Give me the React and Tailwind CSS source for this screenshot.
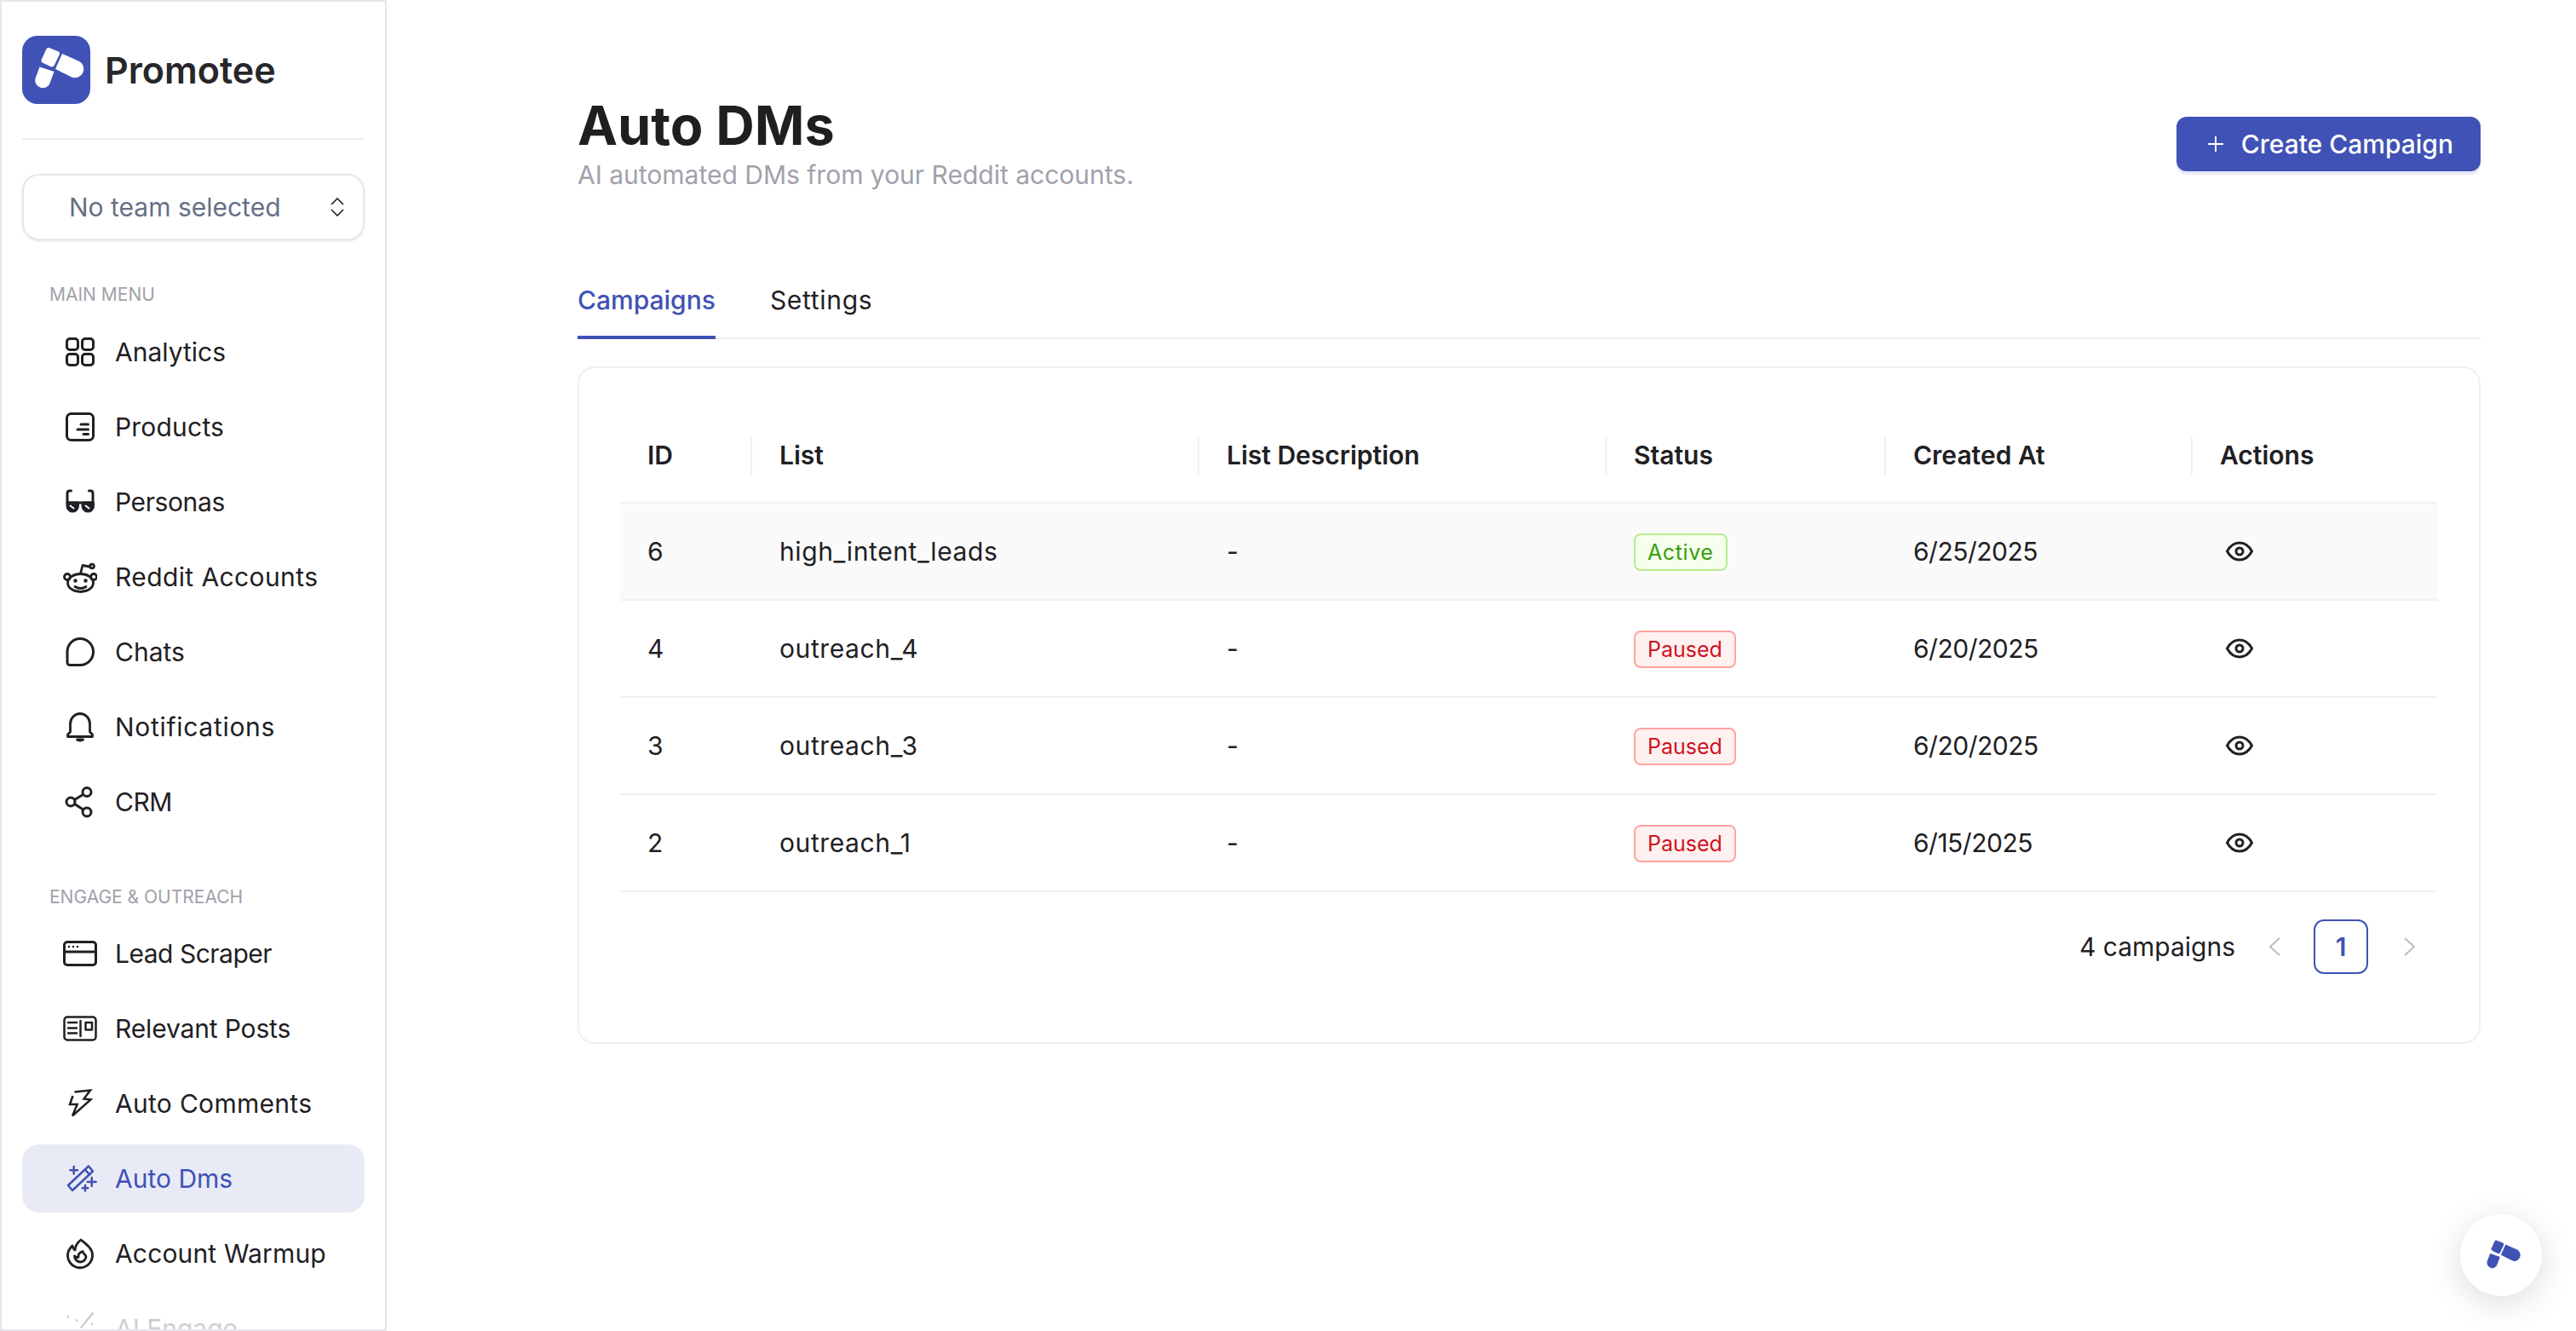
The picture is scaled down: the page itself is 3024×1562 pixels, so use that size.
import React from "react";

const LogoMark = ({ className }) => (
  <svg viewBox="0 0 80 80" className={className} fill="currentColor">
    <polygon points="31,17 41,21 35,33.5 25.5,29" stroke="currentColor" strokeWidth="6" strokeLinejoin="round" />
    <path d="M47 21 L66 29.5 A10 10 0 0 1 58 48.5 L39 39 Z" />
    <path d="M20.5 36.5 L37.5 42 L33 54.5 A9 9 0 0 1 15.5 50 Z" />
  </svg>
);

const Icon = ({ children, sw = 3 }) => (
  <svg viewBox="0 0 40 40" className="w-10 h-10 shrink-0" fill="none" stroke="currentColor" strokeWidth={sw} strokeLinecap="round" strokeLinejoin="round">
    {children}
  </svg>
);

const icons = {
  analytics: (
    <Icon>
      <rect x="4.5" y="4.5" width="13" height="13" rx="3.5" />
      <rect x="22.5" y="4.5" width="13" height="13" rx="3.5" />
      <rect x="4.5" y="22.5" width="13" height="13" rx="3.5" />
      <rect x="22.5" y="22.5" width="13" height="13" rx="3.5" />
    </Icon>
  ),
  products: (
    <Icon>
      <rect x="4.5" y="4.5" width="31" height="31" rx="5" />
      <path d="M21 17H29.5M17 23H29.5M24 28.5H29.5" />
    </Icon>
  ),
  personas: (
    <Icon>
      <path d="M9.5 7H7.5Q5 7 5 10V21H35V10Q35 7 32.5 7H30.5" />
      <path d="M5 21H17.5V25A6.3 7 0 0 1 5 25Z" fill="currentColor" />
      <path d="M23 21H35.5V25A6.3 7 0 0 1 23 25Z" fill="currentColor" />
      <path d="M8.5 24.5L12.5 27.5M26.5 24.5L30.5 27.5" stroke="#fff" strokeWidth="2" />
    </Icon>
  ),
  reddit: (
    <Icon sw={2.8}>
      <ellipse cx="20.5" cy="27" rx="15" ry="10.5" />
      <circle cx="5" cy="20" r="3.5" />
      <circle cx="36" cy="20" r="3.5" />
      <path d="M20.5 16L23 6.5L31 8" />
      <circle cx="34" cy="7.5" r="2.4" />
      <circle cx="14.5" cy="24.5" r="2.2" fill="currentColor" stroke="none" />
      <circle cx="26.5" cy="24.5" r="2.2" fill="currentColor" stroke="none" />
      <path d="M14 31.5Q20.5 35.5 27 31.5" />
    </Icon>
  ),
  chats: (
    <Icon>
      <path d="M20 4.5A15.5 15.5 0 0 1 20 35.5H8A3 3 0 0 1 5 32.5V20A15 15.5 0 0 1 20 4.5Z" />
    </Icon>
  ),
  bell: (
    <Icon sw={2.8}>
      <path d="M20 4.5A11.5 12 0 0 1 31.5 16.5V26L34.5 29V31.5H5.5V29L8.5 26V16.5A11.5 12 0 0 1 20 4.5Z" />
      <path d="M16.5 35H23.5Q20 37 16.5 35Z" fill="currentColor" />
    </Icon>
  ),
  crm: (
    <Icon>
      <circle cx="28" cy="8.5" r="5" />
      <circle cx="9" cy="20" r="5" />
      <circle cx="28" cy="32" r="5" />
      <path d="M13.5 17.5L23.5 11.5M13.5 22.5L23.5 29" />
    </Icon>
  ),
  scraper: (
    <Icon>
      <rect x="1.5" y="6.5" width="37" height="27" rx="3.5" />
      <path d="M2 18H38" />
      <circle cx="7" cy="12" r="1.3" fill="currentColor" stroke="none" />
      <circle cx="12" cy="12" r="1.3" fill="currentColor" stroke="none" />
      <circle cx="17" cy="12" r="1.3" fill="currentColor" stroke="none" />
    </Icon>
  ),
  posts: (
    <Icon sw={2.5}>
      <rect x="1.5" y="6.5" width="37" height="27" rx="3.5" />
      <path d="M6 13H16M6 19.5H16M6 25.5H16M20.5 11V29" />
      <rect x="26.5" y="13" width="7.5" height="8.5" />
    </Icon>
  ),
  comments: (
    <Icon sw={2.5}>
      <path d="M13.5 6.5L32 4.5L24.5 14.5L32.5 15.5L11 34.5L16.7 21H8L11.5 11" strokeLinejoin="miter" strokeLinecap="butt" />
    </Icon>
  ),
  wand: (
    <Icon sw={2.5}>
      <path d="M6 28L11 34L35 11.5L30 5.5Z" />
      <path d="M26 9.5L31 15.5" />
      <path d="M12.7 6V14.5M8.5 10.3H17M33.7 19V29M28.7 24H38.7M26 28V34.5M22.8 31.3H29.2" />
    </Icon>
  ),
  warmup: (
    <Icon sw={2.8}>
      <path d="M21 4C27 9 34.5 14 34.5 21.5A14.5 14.5 0 1 1 6.5 17C8 14 9.5 12 11 11C11.5 13 12 15 14 16C14.5 11 17 7 21 4Z" />
      <path d="M20 30A7 7 0 0 1 13.5 23C15 24.5 16.5 25 18 24.5C17.5 22 19 19 23 17.5C23 20 27 21 27 24A7 7 0 0 1 20 30Z" />
    </Icon>
  ),
  engage: (
    <Icon sw={2}>
      <path d="M21 19L35 2M6 6V7M16 10V11M34 14V15" />
    </Icon>
  ),
};

// tracking per label, the installed font runs a little off the original's widths
const mainMenu = [
  { label: "Analytics", icon: "analytics" },
  { label: "Products", icon: "products", track: "tracking-[0.2px]" },
  { label: "Personas", icon: "personas", track: "tracking-[-0.4px]" },
  { label: "Reddit Accounts", icon: "reddit", track: "tracking-[0.4px]" },
  { label: "Chats", icon: "chats" },
  { label: "Notifications", icon: "bell", track: "tracking-[0.7px]" },
  { label: "CRM", icon: "crm", track: "tracking-[-0.5px]" },
];

const outreach = [
  { label: "Lead Scraper", icon: "scraper", track: "tracking-[-0.5px]" },
  { label: "Relevant Posts", icon: "posts", track: "tracking-[-0.15px]" },
  { label: "Auto Comments", icon: "comments", track: "tracking-[0.3px]" },
  { label: "Auto Dms", icon: "wand", active: true },
  { label: "Account Warmup", icon: "warmup", track: "tracking-[0.15px]" },
  { label: "AI Engage", icon: "engage" },
];

const rows = [
  { id: 6, list: "high_intent_leads", status: "Active", date: "6/25/2025" },
  { id: 4, list: "outreach_4", status: "Paused", date: "6/20/2025" },
  { id: 3, list: "outreach_3", status: "Paused", date: "6/20/2025" },
  { id: 2, list: "outreach_1", status: "Paused", date: "6/15/2025" },
];

const headers = ["ID", "List", "List Description", "Status", "Created At", "Actions"];

const NavItem = ({ label, icon, active, track }) => (
  <div className={`flex items-center h-20 pl-12 gap-[21px] rounded-[20px] text-[30px] ${active ? "bg-[#e8ebf6] text-[#4052b5]" : "text-[#1f2024]"}`}>
    {icons[icon]}
    <span className={track}>{label}</span>
  </div>
);

const EyeIcon = () => (
  <svg viewBox="0 0 32 24" className="w-8 h-6" fill="none" stroke="#1f2024" strokeWidth="3" strokeLinejoin="round">
    <path d="M1.5 12C5 5.5 10 2 16 2S27 5.5 30.5 12C27 18.5 22 22 16 22S5 18.5 1.5 12Z" />
    <circle cx="16" cy="12" r="4" />
  </svg>
);

const Sidebar = () => (
  <aside className="relative w-[454px] h-full shrink-0 border-2 border-[#e5e7eb] bg-white overflow-hidden px-6 pt-10">
    <div className="flex items-center gap-[17px]">
      <div className="w-20 h-20 rounded-[18px] bg-[#4052b5] text-white">
        <LogoMark className="w-20 h-20" />
      </div>
      <span className="text-[43px] font-semibold text-[#27272a]">Promotee</span>
    </div>
    <div className="h-0.5 bg-[#eeeeee] mt-10" />
    <div className="flex items-center justify-between h-[78px] mt-10 pl-[53px] pr-[22px] rounded-[20px] border-2 border-[#e5e7eb] shadow-sm text-[30px] text-[#667085]">
      <span>No team selected</span>
      <svg viewBox="0 0 16 22" className="w-4 h-[22px]" fill="none" stroke="#1f2024" strokeWidth="1.6">
        <path d="M1 8L8 1L15 8M1 14L8 21L15 14" />
      </svg>
    </div>
    <div className="mt-[52px] ml-8 h-6 leading-6 text-[21px] text-[#a1a1aa] uppercase">Main Menu</div>
    <nav className="flex flex-col gap-2 mt-[15px]">
      {mainMenu.map((item) => (
        <NavItem key={item.label} {...item} />
      ))}
    </nav>
    <div className="mt-[60px] ml-8 h-6 leading-6 text-[21px] text-[#a1a1aa] uppercase">Engage &amp; Outreach</div>
    <nav className="flex flex-col gap-2 mt-[14px]">
      {outreach.map((item) => (
        <NavItem key={item.label} {...item} />
      ))}
    </nav>
    <div className="absolute left-0 right-0 bottom-0 h-[50px] bg-gradient-to-t from-white/80 to-white/60" />
  </aside>
);

const StatusTag = ({ status }) =>
  status === "Active" ? (
    <span className="inline-flex items-center h-11 px-3.5 rounded-lg border-2 border-[#b7eb8f] bg-[#f6ffed] text-[#389e0d] text-[25px] tracking-[0.6px]">{status}</span>
  ) : (
    <span className="inline-flex items-center h-11 px-3.5 rounded-lg border-2 border-[#ffa39e] bg-[#fff1f0] text-[#cf1322] text-[25px]">{status}</span>
  );

const CampaignTable = () => (
  <table className="w-full table-fixed border-separate border-spacing-0 text-[30px] text-[#1f2024]">
    <colgroup>
      <col className="w-[155px]" />
      <col className="w-[525px]" />
      <col className="w-[478px]" />
      <col className="w-[328px]" />
      <col className="w-[360px]" />
      <col />
    </colgroup>
    <thead>
      <tr>
        {headers.map((h, i) => (
          <th key={h} className="relative h-[112px] pl-8 text-left font-semibold border-b-2 border-[#f0f0f0]">
            {h}
            {i < 5 && <span className="absolute right-0 top-[34px] w-0.5 h-11 bg-[#f0f0f0]" />}
          </th>
        ))}
      </tr>
    </thead>
    <tbody>
      {rows.map((r, i) => (
        <tr key={r.id} className={i === 0 ? "bg-[#fafafa]" : ""}>
          <td className="h-[114px] pl-8 border-b-2 border-[#f0f0f0]">{r.id}</td>
          <td className="pl-8 border-b-2 border-[#f0f0f0] tracking-[0.6px]">{r.list}</td>
          <td className="pl-8 border-b-2 border-[#f0f0f0]">-</td>
          <td className="pl-8 border-b-2 border-[#f0f0f0]">
            <StatusTag status={r.status} />
          </td>
          <td className="pl-8 border-b-2 border-[#f0f0f0] tracking-[-0.5px]">{r.date}</td>
          <td className="pl-[39px] border-b-2 border-[#f0f0f0]">
            <EyeIcon />
          </td>
        </tr>
      ))}
    </tbody>
  </table>
);

export default function App() {
  return (
    <div className="relative flex w-full h-screen overflow-hidden bg-white font-['Inter',sans-serif]">
      <Sidebar />
      <main className="flex-1 pl-[224px] pr-[112px] pt-[111px]">
        <div className="flex items-start justify-between">
          <div>
            <h1 className="text-[63px] leading-[72px] font-bold text-[#1f1f1f]">Auto DMs</h1>
            <p className="text-[30px] leading-[44px] text-[#a1a1aa]">AI automated DMs from your Reddit accounts.</p>
          </div>
          <button className="flex items-center gap-5 h-16 mt-[26px] pl-9 pr-8 rounded-xl bg-[#4052b5] text-white text-[30px] font-medium shadow-[0_4px_0_#e8ebf6]">
            <svg viewBox="0 0 20 20" className="w-5 h-5" fill="none" stroke="currentColor" strokeWidth="2">
              <path d="M10 1V19M1 10H19" />
            </svg>
            Create Campaign
          </button>
        </div>
        <div className="flex gap-16 mt-[103px] border-b-2 border-[#f0f0f0] text-[30px]">
          <div className="h-[68px] leading-[44px] -mb-0.5 border-b-4 border-[#4052b5] text-[#4052b5] font-medium">Campaigns</div>
          <div className="leading-[44px] text-[#1f2024] tracking-[0.7px]">Settings</div>
        </div>
        <section className="mt-8 h-[795px] rounded-[20px] border-2 border-[#f0f0f0] pt-[47px] pl-12 pr-[49px]">
          <CampaignTable />
          <div className="flex items-center justify-end mt-8 text-[30px] text-[#1f2024]">
            <span>4 campaigns</span>
            <svg viewBox="0 0 16 24" className="w-4 h-6 ml-[38px]" fill="none" stroke="#bdbdbd" strokeWidth="2">
              <path d="M14 2L3 12L14 22" />
            </svg>
            <div className="flex items-center justify-center w-16 h-16 ml-[38px] rounded-xl border-2 border-[#4052b5] text-[#4052b5] font-semibold">1</div>
            <svg viewBox="0 0 16 24" className="w-4 h-6 ml-[41px] mr-6" fill="none" stroke="#bdbdbd" strokeWidth="2">
              <path d="M2 2L13 12L2 22" />
            </svg>
          </div>
        </section>
      </main>
      <div className="absolute right-10 bottom-[41px] flex items-center justify-center w-24 h-24 rounded-full bg-white text-[#4052b5] shadow-[0_8px_40px_rgba(0,0,0,0.14)]">
        <LogoMark className="w-[55px] h-[55px]" />
      </div>
    </div>
  );
}
